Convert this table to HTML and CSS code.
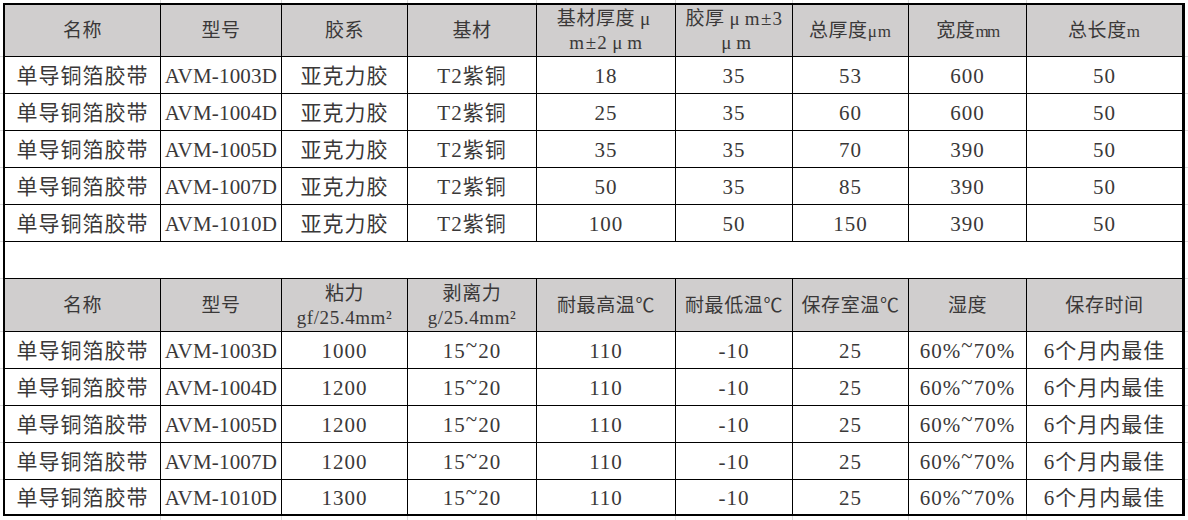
FILE: index.html
```html
<!DOCTYPE html>
<html lang="zh-CN">
<head>
<meta charset="utf-8">
<title>单导铜箔胶带</title>
<link rel="stylesheet" href="styles.css">
</head>
<body>
<div class="sheet">
<table class="spec">
  <colgroup>
    <col class="c1"><col class="c2"><col class="c3"><col class="c4"><col class="c5"><col class="c6"><col class="c7"><col class="c8"><col class="c9">
  </colgroup>
  <tbody>
    <tr class="head">
      <td>名称</td><td>型号</td><td>胶系</td><td>基材</td>
      <td class="two">基材厚度<span class="fw">μ</span><br>m<span class="pm">±</span>2<span class="fw">μ</span>m</td>
      <td class="two">胶厚<span class="fw">μ</span>m<span class="pm">±</span>3<br><span class="fw">μ</span>m</td>
      <td>总厚度<span class="unit">μm</span></td>
      <td>宽度<span class="unit narrow">mm</span></td>
      <td>总长度<span class="unit">m</span></td>
    </tr>
    <tr><td>单导铜箔胶带</td><td class="code">AVM-1003D</td><td>亚克力胶</td><td>T2紫铜</td><td>18</td><td>35</td><td>53</td><td>600</td><td>50</td></tr>
    <tr><td>单导铜箔胶带</td><td class="code">AVM-1004D</td><td>亚克力胶</td><td>T2紫铜</td><td>25</td><td>35</td><td>60</td><td>600</td><td>50</td></tr>
    <tr><td>单导铜箔胶带</td><td class="code">AVM-1005D</td><td>亚克力胶</td><td>T2紫铜</td><td>35</td><td>35</td><td>70</td><td>390</td><td>50</td></tr>
    <tr><td>单导铜箔胶带</td><td class="code">AVM-1007D</td><td>亚克力胶</td><td>T2紫铜</td><td>50</td><td>35</td><td>85</td><td>390</td><td>50</td></tr>
    <tr><td>单导铜箔胶带</td><td class="code">AVM-1010D</td><td>亚克力胶</td><td>T2紫铜</td><td>100</td><td>50</td><td>150</td><td>390</td><td>50</td></tr>
    <tr class="blank"><td colspan="9"></td></tr>
    <tr class="head head2">
      <td>名称</td><td>型号</td>
      <td class="two">粘力<br>gf/25.4mm²</td>
      <td class="two">剥离力<br>g/25.4mm²</td>
      <td>耐最高温℃</td><td>耐最低温℃</td><td>保存室温℃</td><td>湿度</td><td>保存时间</td>
    </tr>
    <tr><td>单导铜箔胶带</td><td class="code">AVM-1003D</td><td>1000</td><td>15<span class="tl">~</span>20</td><td>110</td><td class="neg">-10</td><td>25</td><td>60%<span class="tl">~</span>70%</td><td>6个月内最佳</td></tr>
    <tr><td>单导铜箔胶带</td><td class="code">AVM-1004D</td><td>1200</td><td>15<span class="tl">~</span>20</td><td>110</td><td class="neg">-10</td><td>25</td><td>60%<span class="tl">~</span>70%</td><td>6个月内最佳</td></tr>
    <tr><td>单导铜箔胶带</td><td class="code">AVM-1005D</td><td>1200</td><td>15<span class="tl">~</span>20</td><td>110</td><td class="neg">-10</td><td>25</td><td>60%<span class="tl">~</span>70%</td><td>6个月内最佳</td></tr>
    <tr><td>单导铜箔胶带</td><td class="code">AVM-1007D</td><td>1200</td><td>15<span class="tl">~</span>20</td><td>110</td><td class="neg">-10</td><td>25</td><td>60%<span class="tl">~</span>70%</td><td>6个月内最佳</td></tr>
    <tr class="last"><td>单导铜箔胶带</td><td class="code">AVM-1010D</td><td>1300</td><td>15<span class="tl">~</span>20</td><td>110</td><td class="neg">-10</td><td>25</td><td>60%<span class="tl">~</span>70%</td><td>6个月内最佳</td></tr>
  </tbody>
</table>
</div>
</body>
</html>
```
FILE: styles.css
```css
html, body {
  margin: 0;
  padding: 0;
  background: #ffffff;
}

.sheet {
  width: 1188px;
  height: 520px;
  box-sizing: border-box;
  padding: 3px 3px 0 3px;
  background-color: #ffffff;
  background-repeat: no-repeat;
  background-image:
    linear-gradient(#d9d9d9, #d9d9d9),
    linear-gradient(#d9d9d9, #d9d9d9),
    linear-gradient(#d9d9d9, #d9d9d9),
    linear-gradient(#d9d9d9, #d9d9d9),
    linear-gradient(#d9d9d9, #d9d9d9),
    linear-gradient(#d9d9d9, #d9d9d9),
    linear-gradient(#d9d9d9, #d9d9d9),
    linear-gradient(#d9d9d9, #d9d9d9),
    linear-gradient(#d9d9d9, #d9d9d9),
    linear-gradient(#d9d9d9, #d9d9d9),
    linear-gradient(#d9d9d9, #d9d9d9),
    linear-gradient(#d9d9d9, #d9d9d9),
    linear-gradient(#d9d9d9, #d9d9d9),
    linear-gradient(#d9d9d9, #d9d9d9),
    linear-gradient(#d9d9d9, #d9d9d9),
    linear-gradient(#d9d9d9, #d9d9d9),
    linear-gradient(#d9d9d9, #d9d9d9),
    linear-gradient(#d9d9d9, #d9d9d9),
    linear-gradient(#d9d9d9, #d9d9d9),
    linear-gradient(#d9d9d9, #d9d9d9);
  background-size:
    1px 100%, 1px 100%, 1px 100%, 1px 100%, 1px 100%, 1px 100%, 1px 100%, 1px 100%,
    100% 1px, 100% 1px, 100% 1px, 100% 1px, 100% 1px, 100% 1px,
    100% 1px, 100% 1px, 100% 1px, 100% 1px, 100% 1px, 100% 1px;
  background-position:
    160px 0, 281px 0, 407px 0, 536px 0, 675px 0, 792px 0, 908px 0, 1026px 0,
    0 56px, 0 93px, 0 130px, 0 167px, 0 204px, 0 241px,
    0 278px, 0 331px, 0 368px, 0 405px, 0 442px, 0 479px;
}

.spec {
  box-sizing: border-box;
  width: 1182px;
  table-layout: fixed;
  border-collapse: separate;
  border-spacing: 0;
  background: #ffffff;
  border-style: solid;
  border-color: #000000;
  border-width: 2px 3px 2px 2px;
  font-family: "Liberation Serif", "Noto Sans CJK SC", serif;
  font-size: 21px;
  letter-spacing: 1px;
  color: #3a3838;
}

.c1 { width: 156px; }
.c2 { width: 121px; }
.c3 { width: 126px; }
.c4 { width: 129px; }
.c5 { width: 139px; }
.c6 { width: 117px; }
.c7 { width: 116px; }
.c8 { width: 118px; }
.c9 { width: 155px; }

.spec td {
  box-sizing: border-box;
  height: 37px;
  padding: 2px 0 0 0;
  text-align: center;
  vertical-align: middle;
  white-space: nowrap;
  line-height: 24px;
  border-right: 1px solid #000000;
  border-bottom: 1px solid #000000;
}

.spec td:last-child {
  border-right: 0;
}

.spec td.code {
  letter-spacing: 0.2px;
}

.spec tr.last td {
  border-bottom: 0;
  height: 34px;
  padding-top: 1px;
}

.spec tr.head td {
  height: 52px;
  background: #d0cece;
  padding-top: 1px;
  font-size: 19px;
  letter-spacing: 0.6px;
}

.spec tr.head2 td {
  height: 53px;
}

.spec tr.blank td {
  background: #ffffff;
}

.fw {
  display: inline-block;
  width: 20px;
  text-align: center;
  letter-spacing: 0;
}

.pm {
  letter-spacing: 0;
  margin: 0 1px;
}

.unit {
  font-size: 17px;
  letter-spacing: 1px;
}

.unit.narrow {
  letter-spacing: -1.5px;
}

.neg {
  word-spacing: 0;
}

.tl {
  position: relative;
  top: -6px;
}
```
